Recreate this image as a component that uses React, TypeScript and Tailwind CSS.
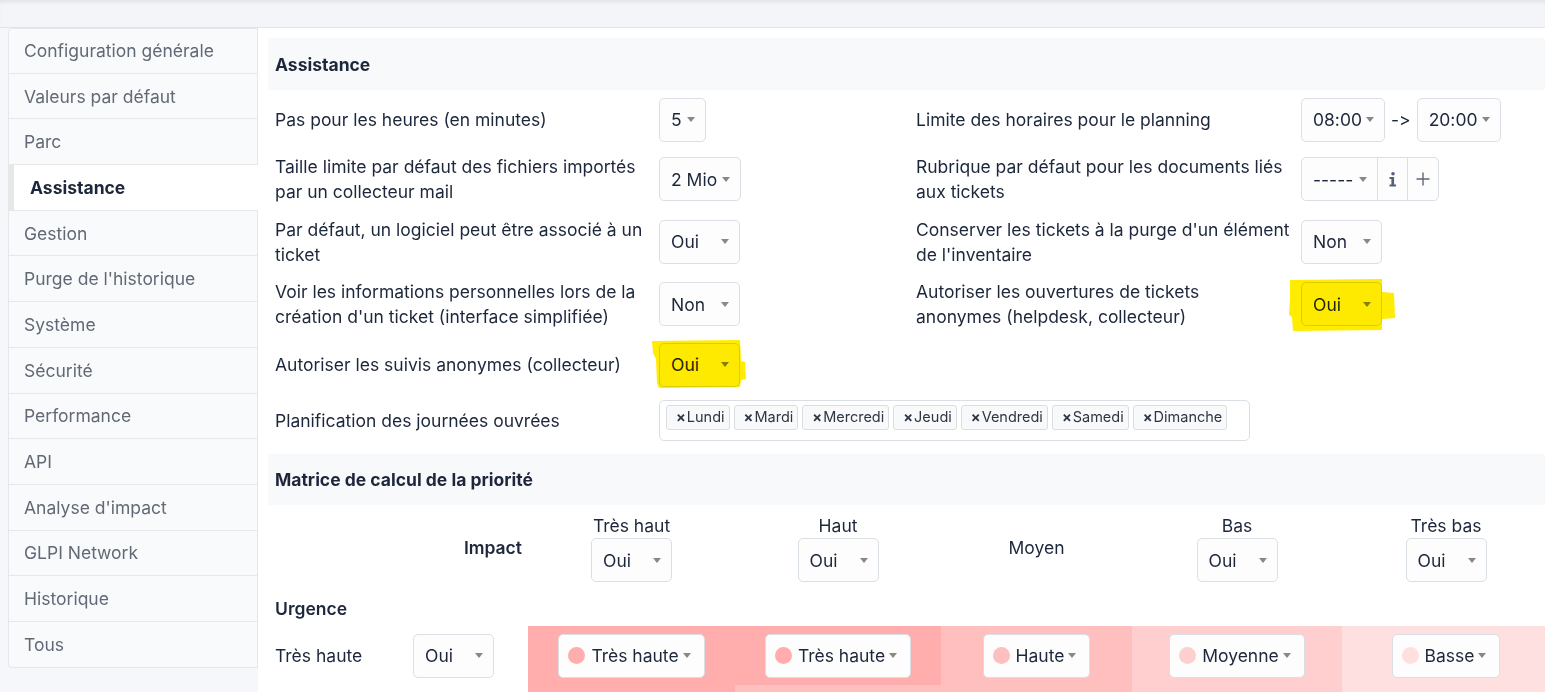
import React from "react";

const Caret = () => (
  <span className="inline-block h-0 w-0 shrink-0 border-x-[4px] border-t-[5px] border-x-transparent border-t-[#888888]" />
);

function Select({ value, w }: { value: string; w: string }) {
  return (
    <div
      className={`flex h-[44px] items-center justify-between rounded-[5px] border border-[#dadfe5] bg-[#fdfdfd] pl-[11px] pr-[10px] text-[#1d273b] ${w}`}
    >
      <span>{value}</span>
      <Caret />
    </div>
  );
}

function Blob1() {
  return (
    <svg
      className="pointer-events-none absolute left-[-8px] top-[-4px] h-[50px] w-[96px] mix-blend-multiply"
      viewBox="0 0 96 50"
    >
      <polygon points="1,2 89,1 90,22 94,23 95,40 90,41 89,48 8,49 6,44 5,20 2,14" fill="#ffec00" />
    </svg>
  );
}

function Blob2() {
  return (
    <svg
      className="pointer-events-none absolute left-[-12px] top-[-3px] h-[53px] w-[108px] mix-blend-multiply"
      viewBox="0 0 108 53"
    >
      <polygon points="1,1 93,0 93,13 105,14 106,39 93,40 93,51 4,52 3,38 0,36 1,20" fill="#ffec00" />
    </svg>
  );
}

const tabs = [
  "Configuration générale",
  "Valeurs par défaut",
  "Parc",
  "Assistance",
  "Gestion",
  "Purge de l'historique",
  "Système",
  "Sécurité",
  "Performance",
  "API",
  "Analyse d'impact",
  "GLPI Network",
  "Historique",
  "Tous",
];

const days = ["Lundi", "Mardi", "Mercredi", "Jeudi", "Vendredi", "Samedi", "Dimanche"];

type Prio = { label: string; color: string };
const P5: Prio = { label: "Très haute", color: "#ffadad" };
const P4: Prio = { label: "Haute", color: "#ffbfbf" };
const P3: Prio = { label: "Moyenne", color: "#ffcece" };
const P2: Prio = { label: "Basse", color: "#ffe0e0" };
const P1: Prio = { label: "Très basse", color: "#fff2f2" };

const matrix: { label: string; cells: Prio[] }[] = [
  { label: "Très haute", cells: [P5, P5, P4, P3, P2] },
  { label: "Haute", cells: [P5, P4, P4, P3, P2] },
  { label: "Moyenne", cells: [P4, P4, P3, P2, P2] },
  { label: "Basse", cells: [P3, P3, P2, P2, P1] },
];

function PrioSelect({ p }: { p: Prio }) {
  return (
    <div className="inline-flex h-[44px] items-center whitespace-nowrap rounded-[5px] border border-[#dadfe5] bg-[#fdfdfd] pl-[9px] pr-[13px] text-[#1d273b]">
      <span className="h-[17px] w-[17px] shrink-0 rounded-full" style={{ backgroundColor: p.color }} />
      <span className="ml-[6px]">{p.label}</span>
      <span className="ml-[4px] flex">
        <Caret />
      </span>
    </div>
  );
}

function Cell({ children, className = "py-[6.25px]" }: { children?: React.ReactNode; className?: string }) {
  return <div className={`flex items-center whitespace-nowrap px-[7px] ${className}`}>{children}</div>;
}

export default function App() {
  return (
    <div className="h-screen overflow-hidden bg-[#f5f7fb] font-['Inter','Noto_Sans',sans-serif] text-[17.5px] leading-[25px] text-[#1d273b] [font-feature-settings:'calt'_0]">
      <div className="h-[28px] border-b border-[#e2e3e6] bg-[#f4f5f8] shadow-[inset_0_4px_4px_-2px_rgba(0,0,0,0.08)]" />
      <div className="flex">
        <nav className="ml-[8px] w-[250px] shrink-0">
          {tabs.map((t, i) => {
            const active = t === "Assistance";
            return (
              <div
                key={t}
                className={`flex h-[45.7px] items-center border-b border-[#e6e7e9] ${
                  i === 0 ? "rounded-tl-[4px] border-t" : ""
                } ${i === tabs.length - 1 ? "rounded-bl-[4px]" : ""} ${
                  active
                    ? "border-l-[6px] border-l-[#e6e7e9] bg-white pl-[16px] font-bold text-[#1d273b]"
                    : "border-l border-r bg-[#f9fafc] pl-[15px] text-[#626976]"
                }`}
              >
                {t}
              </div>
            );
          })}
        </nav>
        <main className="h-[664px] flex-1 overflow-hidden bg-white pl-[10px] pt-[10px]">
          <div className="flex h-[52px] items-center bg-[#f8f9fa] px-[7px] font-bold">Assistance</div>
          <div className="mt-[1.5px] grid grid-cols-[384px_257px_385px_1fr]">
            <Cell>Pas pour les heures (en minutes)</Cell>
            <Cell>
              <Select value="5" w="w-[47px]" />
            </Cell>
            <Cell>Limite des horaires pour le planning</Cell>
            <Cell className="gap-[6px] py-[6.25px]">
              <Select value="08:00" w="w-[84px]" />
              <span className="[font-feature-settings:'calt'_0,'liga'_0]">-&gt;</span>
              <Select value="20:00" w="w-[84px]" />
            </Cell>

            <Cell>
              <span>
                Taille limite par défaut des fichiers importés
                <br />
                par un collecteur mail
              </span>
            </Cell>
            <Cell>
              <Select value="2 Mio" w="w-[82px]" />
            </Cell>
            <Cell>
              <span>
                Rubrique par défaut pour les documents liés
                <br />
                aux tickets
              </span>
            </Cell>
            <Cell>
              <div className="flex h-[44px] rounded-[5px] border border-[#dadfe5] bg-[#fdfdfd]">
                <div className="flex w-[76px] items-center justify-between border-r border-[#dadfe5] pl-[11px] pr-[10px]">
                  <span>-----</span>
                  <Caret />
                </div>
                <div className="flex w-[30px] items-center justify-center border-r border-[#dadfe5]">
                  <svg width="8" height="15" viewBox="0 0 8 15" fill="#56607a">
                    <circle cx="4" cy="1.8" r="1.8" />
                    <path d="M0.5 5h4.6v7.6h1.9V14.5H0.5v-1.9h1.9V6.9H0.5z" />
                  </svg>
                </div>
                <div className="flex w-[30px] items-center justify-center">
                  <svg width="14" height="14" viewBox="0 0 14 14" stroke="#5f6672" strokeWidth="1.4">
                    <path d="M7 0.5v13M0.5 7h13" />
                  </svg>
                </div>
              </div>
            </Cell>

            <Cell>
              <span>
                Par défaut, un logiciel peut être associé à un
                <br />
                ticket
              </span>
            </Cell>
            <Cell>
              <Select value="Oui" w="w-[81px]" />
            </Cell>
            <Cell>
              <span>
                Conserver les tickets à la purge d'un élément
                <br />
                de l'inventaire
              </span>
            </Cell>
            <Cell>
              <Select value="Non" w="w-[81px]" />
            </Cell>

            <Cell>
              <span>
                Voir les informations personnelles lors de la
                <br />
                création d'un ticket (interface simplifiée)
              </span>
            </Cell>
            <Cell>
              <Select value="Non" w="w-[81px]" />
            </Cell>
            <Cell>
              <span>
                Autoriser les ouvertures de tickets
                <br />
                anonymes (helpdesk, collecteur)
              </span>
            </Cell>
            <Cell>
              <div className="relative">
                <Select value="Oui" w="w-[81px]" />
                <Blob2 />
              </div>
            </Cell>

            <Cell className="py-[7px]">Autoriser les suivis anonymes (collecteur)</Cell>
            <Cell className="py-[7px]">
              <div className="relative">
                <Select value="Oui" w="w-[81px]" />
                <Blob1 />
              </div>
            </Cell>
            <Cell className="py-[7px]" />
            <Cell className="py-[7px]" />

            <Cell>Planification des journées ouvrées</Cell>
            <Cell className="col-span-3 py-[6.25px]">
              <div className="flex h-[41px] w-[591px] flex-wrap items-start gap-[4px] rounded-[5px] border border-[#dadfe5] bg-white px-[6px] pt-[4px]">
                {days.map((d) => (
                  <span
                    key={d}
                    className="flex h-[25px] items-center rounded-[3px] border border-[#dcdde0] bg-[#f8f9fa] pl-[9px] pr-[4px] text-[14.5px] leading-[20px] text-[#2f3643]"
                  >
                    <span className="mr-[1px] font-bold">×</span>
                    {d}
                  </span>
                ))}
              </div>
            </Cell>
          </div>

          <div className="mt-[7px] flex h-[51px] items-center bg-[#f8f9fa] px-[7px] font-bold">
            Matrice de calcul de la priorité
          </div>
          <div className="grid w-[1282px] grid-cols-[137px_123px_207px_206px_191px_210px_208px]">
            <div className="col-span-2 flex items-center justify-end py-[8px] pr-[6px] font-semibold">Impact</div>
            {["Très haut", "Haut", "Moyen", "Bas", "Très bas"].map((h) => (
              <div key={h} className="flex flex-col items-center justify-center py-[8px]">
                <span>{h}</span>
                {h !== "Moyen" && <Select value="Oui" w="w-[81px]" />}
              </div>
            ))}

            <div className="col-span-2 px-[7px] py-[5.5px] font-semibold">Urgence</div>
            <div className="col-span-5" />

            {matrix.map((row) => (
              <React.Fragment key={row.label}>
                <div className="flex items-center px-[7px] py-[7.5px]">{row.label}</div>
                <div className="flex items-center px-[8px] py-[7.5px]">
                  <Select value="Oui" w="w-[81px]" />
                </div>
                {row.cells.map((p, j) => (
                  <div
                    key={j}
                    className="flex items-center justify-center py-[7.5px]"
                    style={{ backgroundColor: p.color }}
                  >
                    <PrioSelect p={p} />
                  </div>
                ))}
              </React.Fragment>
            ))}
          </div>
        </main>
      </div>
    </div>
  );
}
